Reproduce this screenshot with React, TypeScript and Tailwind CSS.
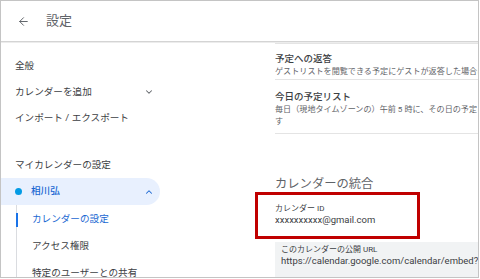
import { ArrowLeft, ChevronDown, ChevronUp } from "lucide-react";

const font = { fontFamily: '"Roboto", "Noto Sans CJK JP", sans-serif' };

function NavItem({ label, chevron }: { label: string; chevron?: boolean }) {
  return (
    <div className="flex h-[26px] w-[159px] items-center justify-between pl-[14px] pr-[6px] text-[9.6px] text-[#3c4043]">
      <span>{label}</span>
      {chevron && <ChevronDown className="size-[10px] text-[#5f6368]" strokeWidth={2.5} />}
    </div>
  );
}

function SubItem({ label, active }: { label: string; active?: boolean }) {
  if (active) {
    return (
      <div className="flex h-[27px] items-center text-[9.6px] text-[#1967d2]">
        <span className="-ml-[1px] mr-[14px] h-[14px] w-[2px] bg-[#1a73e8]" />
        <span>{label}</span>
      </div>
    );
  }
  return (
    <div className="flex h-[27px] items-center pl-[15px] text-[9.6px] text-[#3c4043]">
      {label}
    </div>
  );
}

export default function App() {
  return (
    <div className="relative h-[279px] w-[480px] overflow-hidden bg-white" style={font}>
      <div className="flex h-[278px] w-[479px] flex-col overflow-hidden border border-[#c4c4c4]">
        {/* header */}
        <div className="flex h-[41px] shrink-0 items-center border-b border-[#d4d4d4] pl-[16px] shadow-[0_1px_0_#ececec]">
          <ArrowLeft className="size-[13px] text-[#5f6368]" strokeWidth={1.8} />
          <span className="ml-[16px] text-[13px] text-[#5f6368]">設定</span>
        </div>

        <div className="flex min-h-0 flex-1">
          {/* sidebar */}
          <div className="w-[274px] shrink-0 pt-[11px]">
            <NavItem label="全般" />
            <NavItem label="カレンダーを追加" chevron />
            <NavItem label="インポート / エクスポート" />

            <div className="mt-[21px] flex h-[26px] items-center pl-[14px] text-[9.6px] text-[#3c4043]">
              マイカレンダーの設定
            </div>
            <div className="flex h-[27px] w-[159px] items-center justify-between rounded-r-full bg-[#e8f0fe] pl-[14px] pr-[6px]">
              <div className="flex items-center">
                <span className="size-[7px] rounded-full bg-[#039be5]" />
                <span className="ml-[9px] text-[9.6px] font-medium text-[#1967d2]">相川弘</span>
              </div>
              <ChevronUp className="size-[10px] text-[#1967d2]" strokeWidth={2.5} />
            </div>
            <div className="ml-[15px] border-l border-[#dadce0] pt-[1px]">
              <SubItem label="カレンダーの設定" active />
              <SubItem label="アクセス権限" />
              <SubItem label="特定のユーザーとの共有" />
            </div>
          </div>

          {/* content */}
          <div className="min-w-0 flex-1 overflow-hidden pt-[1px]">
            <div className="w-[330px]">
              <div className="border-y border-[#e4e4e4] pb-[2px] pt-[8px]">
                <div className="text-[9.5px] font-medium leading-[13px] text-[#3c4043]">予定への返答</div>
                <div className="whitespace-nowrap text-[8.1px] leading-[12px] text-[#5f6368]">
                  ゲストリストを閲覧できる予定にゲストが返答した場合にメールで通知します
                </div>
              </div>
              <div className="border-b border-[#e4e4e4] pb-[6px] pt-[10px]">
                <div className="text-[9.5px] font-medium leading-[13px] text-[#3c4043]">今日の予定リスト</div>
                <div className="text-[8.1px] leading-[12px] text-[#5f6368]">
                  <div className="whitespace-nowrap">毎日（現地タイムゾーンの）午前 5 時に、その日の予定リストをメールで送信しま</div>
                  <div>す</div>
                </div>
              </div>

              <div className="mt-[42px] text-[12.3px] leading-[16px] text-[#5f6368]">カレンダーの統合</div>

              <div className="mt-[12px] text-[8px] leading-[10px] text-[#3c4043]">カレンダー ID</div>
              <div className="text-[9.5px] leading-[12px] text-[#3c4043]">xxxxxxxxxx@gmail.com</div>

              <div className="mt-[16px] h-[40px] bg-[#f1f3f4] pl-[6px] pt-[3px]">
                <div className="text-[8px] leading-[10px] text-[#3c4043]">このカレンダーの公開 URL</div>
                <div className="whitespace-nowrap text-[9.5px] leading-[12px] text-[#3c4043]">
                  https://calendar.google.com/calendar/embed?src=xxxxxxxxxx%40gmail.com
                </div>
              </div>
            </div>
          </div>
        </div>
      </div>

      {/* annotation */}
      <div className="absolute left-[255px] top-[192px] h-[47px] w-[165px] border-[3px] border-[#c00000]" />
    </div>
  );
}
